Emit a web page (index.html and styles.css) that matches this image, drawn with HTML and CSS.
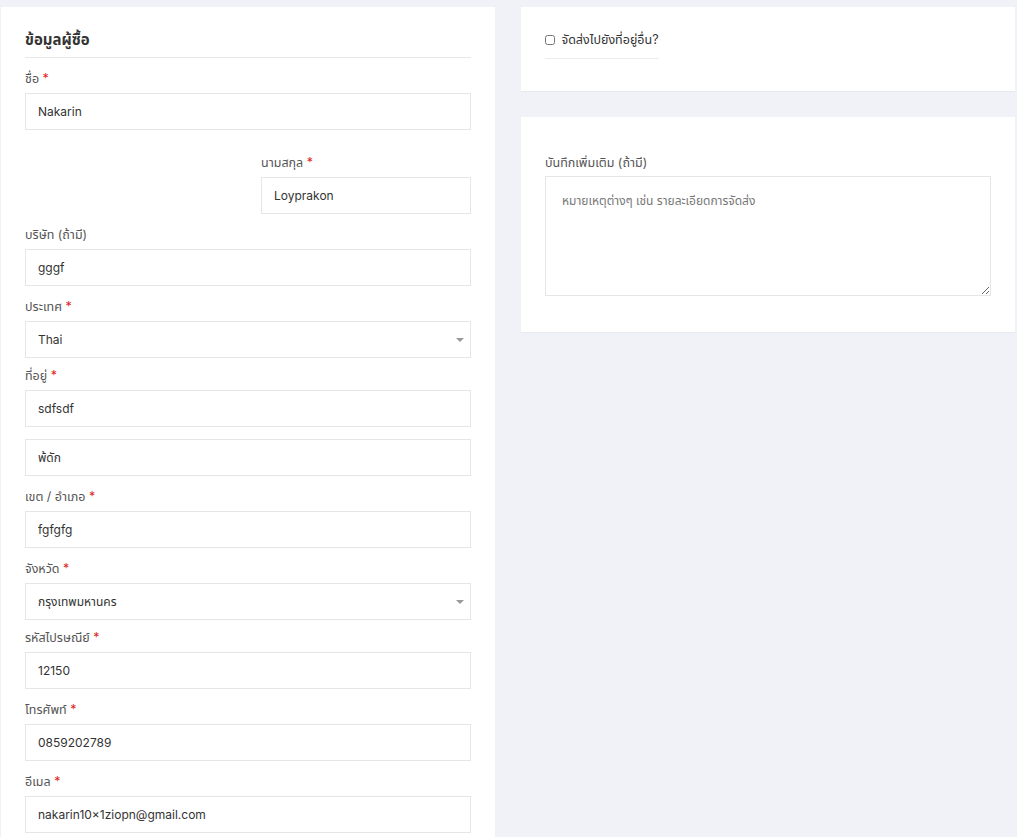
FILE: index.html
```html
<!DOCTYPE html>
<html lang="th">
<head>
    <meta charset="UTF-8">
    <meta name="viewport" content="width=device-width">
    <title>Checkout</title>
    <link rel="stylesheet" href="styles.css">
</head>
<body>
<div class="checkout">
    <div class="card billing">
        <h3 class="card-title">ข้อมูลผู้ซื้อ</h3>

        <div class="field">
            <label>ชื่อ <span class="req">*</span></label>
            <input type="text" value="Nakarin">
        </div>
        <div class="field half last-name">
            <label>นามสกุล <span class="req">*</span></label>
            <input type="text" value="Loyprakon">
        </div>
        <div class="field">
            <label>บริษัท (ถ้ามี)</label>
            <input type="text" value="gggf">
        </div>
        <div class="field select-field">
            <label>ประเทศ <span class="req">*</span></label>
            <div class="select">Thai</div>
        </div>
        <div class="field">
            <label>ที่อยู่ <span class="req">*</span></label>
            <input type="text" value="sdfsdf">
            <input type="text" class="addr2" value="พ้ดัก">
        </div>
        <div class="field">
            <label>เขต / อำเภอ <span class="req">*</span></label>
            <input type="text" value="fgfgfg">
        </div>
        <div class="field select-field">
            <label>จังหวัด <span class="req">*</span></label>
            <div class="select">กรุงเทพมหานคร</div>
        </div>
        <div class="field">
            <label>รหัสไปรษณีย์ <span class="req">*</span></label>
            <input type="text" value="12150">
        </div>
        <div class="field">
            <label>โทรศัพท์ <span class="req">*</span></label>
            <input type="text" value="0859202789">
        </div>
        <div class="field">
            <label>อีเมล <span class="req">*</span></label>
            <input type="text" value="nakarin10×1ziopn@gmail.com">
        </div>
    </div>

    <div class="side">
        <div class="card ship">
            <label class="ship-toggle"><input type="checkbox"> จัดส่งไปยังที่อยู่อื่น?</label>
        </div>
        <div class="card notes">
            <label>บันทึกเพิ่มเติม (ถ้ามี)</label>
            <textarea placeholder="หมายเหตุต่างๆ เช่น รายละเอียดการจัดส่ง"></textarea>
        </div>
    </div>
</div>
</body>
</html>
```

FILE: styles.css
```css
body {
    margin: 0;
    background: #f1f2f7;
    font-family: Inter, "Noto Sans Thai", Tahoma, "DejaVu Sans", sans-serif;
    font-size: 12px;
    color: #333;
}

.checkout {
    display: flex;
    gap: 26px;
    padding: 7px 2px 0 1px;
    align-items: flex-start;
}

.card {
    background: #fff;
    box-sizing: border-box;
    box-shadow: 0 1px 0 #e8e9ee;
}

.billing {
    width: 494px;
    padding: 22px 24px 4px;
}

.side {
    flex: 1;
    display: flex;
    flex-direction: column;
    gap: 26px;
}

.card-title {
    margin: 0 0 6px;
    font-size: 15px;
    line-height: 22px;
    font-weight: 700;
    color: #333;
    padding-bottom: 6px;
    border-bottom: 1px solid #e8e8e8;
}

.field {
    margin-top: 11px;
}

.select-field + .field {
    margin-top: 8px;
}

.field label {
    display: block;
    line-height: 20px;
    margin-bottom: 4px;
    font-size: 12.5px;
    color: #555;
}

.req {
    color: #e2231a;
}

.field.half {
    width: 210px;
    margin-left: 236px;
    margin-top: 23px;
}

input[type=text], .select {
    display: block;
    box-sizing: border-box;
    width: 100%;
    height: 37px;
    padding: 0 12px;
    border: 1px solid #e6e6e6;
    background: #fff;
    font: inherit;
    color: #333;
    line-height: 35px;
}

input.addr2 {
    margin-top: 12px;
}

.select {
    position: relative;
}

.select::after {
    content: "";
    position: absolute;
    right: 6px;
    top: 16px;
    border-left: 4px solid transparent;
    border-right: 4px solid transparent;
    border-top: 4px solid #999;
}

.ship {
    height: 84px;
    padding: 23px 24px 0;
}

.ship-toggle {
    display: inline-block;
    white-space: nowrap;
    line-height: 20px;
    padding-bottom: 8px;
    border-bottom: 1px solid #ececec;
    color: #333;
    font-size: 12.5px;
}

.ship-toggle input {
    margin: 0 3px 0 0;
    width: 10px;
    height: 10px;
    vertical-align: -1px;
}

.notes {
    padding: 36px 24px 36px;
}

.notes label {
    display: block;
    line-height: 20px;
    margin-bottom: 3px;
    font-size: 12.5px;
    color: #555;
}

textarea {
    display: block;
    box-sizing: border-box;
    width: 100%;
    height: 120px;
    border: 1px solid #e6e6e6;
    padding: 15px 16px;
    font: inherit;
    color: #333;
    resize: vertical;
}

textarea::placeholder {
    color: #777;
}
```
